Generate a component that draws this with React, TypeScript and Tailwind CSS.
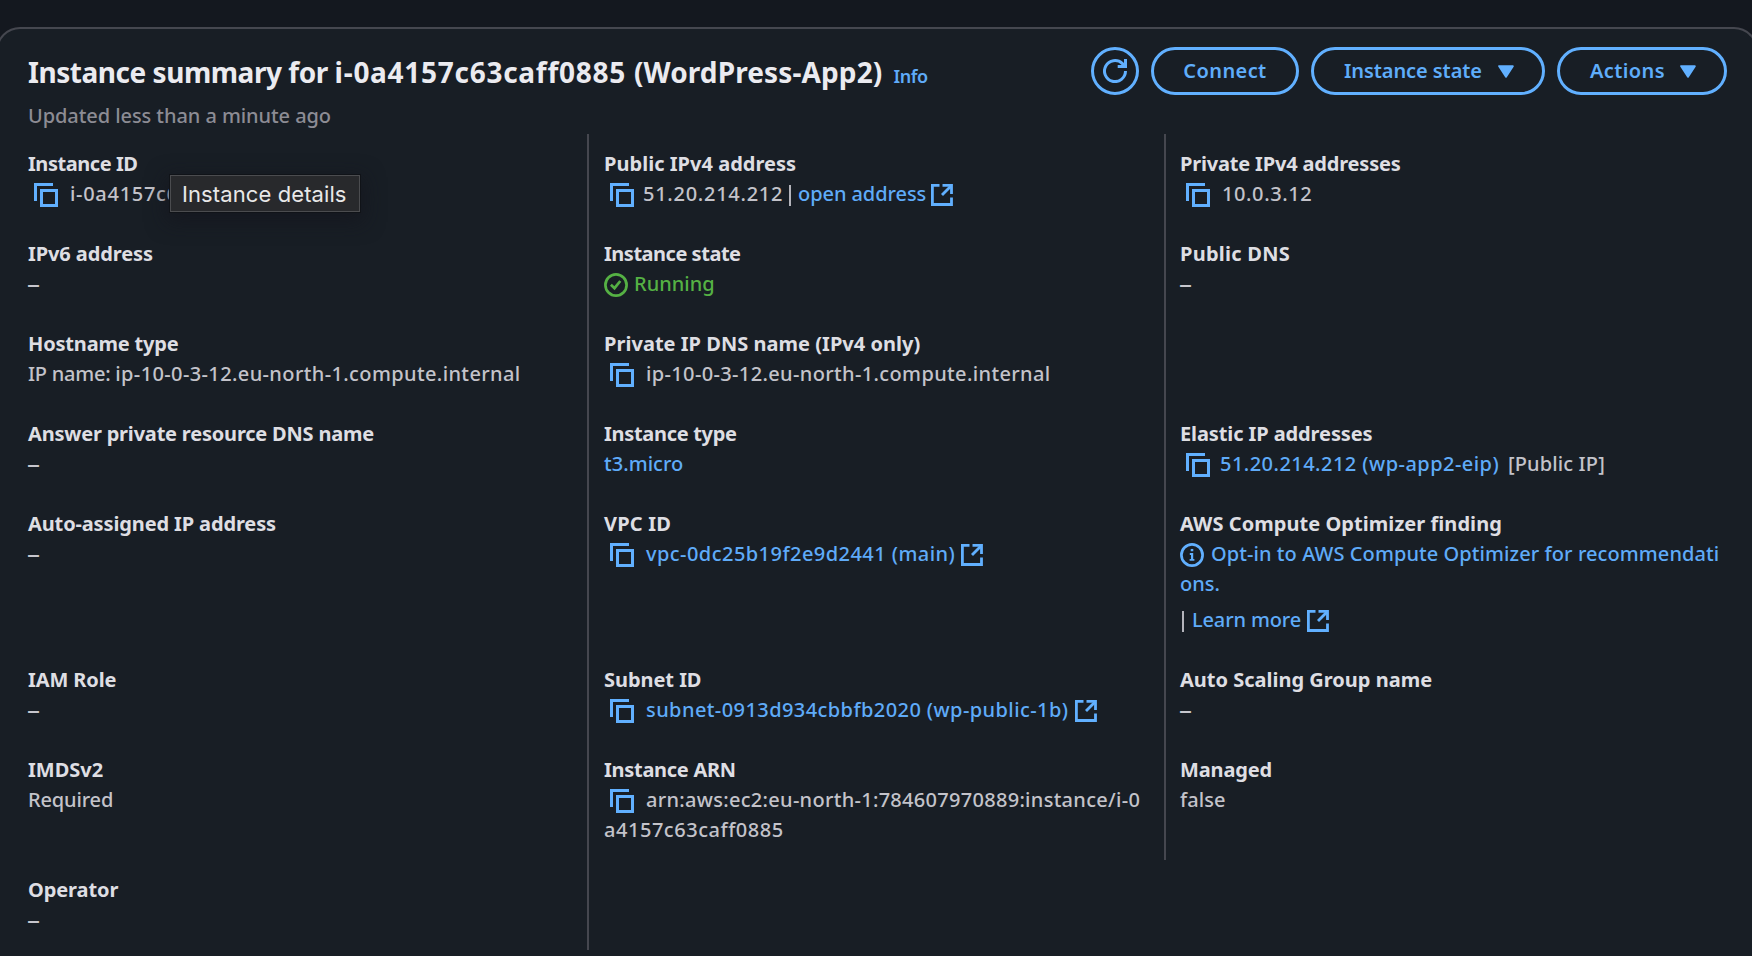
import type { ReactNode } from "react";

const LINK = "font-medium text-[#5fabf8]";
const VALUE = "font-medium text-[#c3c3ca]";

function CopyIcon() {
  return (
    <svg className="mt-[4px] ml-[6px] h-6 w-6 shrink-0 text-[#61b0ff]" viewBox="0 0 24 24" fill="none" stroke="currentColor" strokeWidth="3">
      <path d="M19 1.5H1.5V18" />
      <rect x="7.5" y="7.5" width="15" height="15" />
    </svg>
  );
}

function ExternalIcon() {
  return (
    <svg className="mt-[5px] h-[22px] w-[22px] shrink-0 text-[#61b0ff]" viewBox="0 0 22 22" fill="none" stroke="currentColor" strokeWidth="2.8">
      <path d="M8.5 1.4H1.4V20.5H20.5V13.5" />
      <path d="M11.5 1.4H20.5V10" />
      <path d="M20 2L11 11" />
    </svg>
  );
}

function RunningIcon() {
  return (
    <svg className="mt-[4px] h-6 w-6 shrink-0 text-[#55b144]" viewBox="0 0 24 24" fill="none" stroke="currentColor" strokeWidth="2.7">
      <circle cx="12" cy="12" r="10.6" />
      <path d="M6.9 11.8L10.5 15.2L16.3 8" />
    </svg>
  );
}

function InfoIcon() {
  return (
    <svg className="mt-[4px] h-6 w-6 shrink-0 text-[#61b0ff]" viewBox="0 0 24 24" fill="none" stroke="currentColor" strokeWidth="2.7">
      <circle cx="12" cy="12" r="10.6" />
      <path d="M10.7 7.1H13.3" strokeWidth="2.3" />
      <path d="M9.8 11H12.1V17" strokeWidth="2.2" />
      <path d="M9.6 16.9H14.4" strokeWidth="1.7" />
    </svg>
  );
}

function RefreshIcon() {
  return (
    <svg className="h-6 w-6 text-[#61b0ff]" viewBox="0 0 24 24" fill="none" stroke="currentColor" strokeWidth="3">
      <path d="M22.5 12A10.5 10.5 0 1 1 19.2 4.4L22 7.4" />
      <path d="M22.5 0V7.5H14.7" />
    </svg>
  );
}

function Caret() {
  return (
    <svg className="h-[13px] w-4 text-[#61b0ff]" viewBox="0 0 16 13" fill="currentColor" stroke="currentColor" strokeWidth="2" strokeLinejoin="round">
      <path d="M1.2 1.2H14.8L8 11.6Z" />
    </svg>
  );
}

function Cell({ col, label, tracking = "", children }: { col: 1 | 2 | 3; label?: string; tracking?: string; children?: ReactNode }) {
  const edge =
    col === 1 ? "" : col === 2 ? "border-l-2 border-[#45474f] pl-[15px]" : "border-l-2 border-[#45474f] pl-[14px]";
  return (
    <div className={`relative min-h-[90px] pt-[15px] pb-[15px] whitespace-nowrap ${edge}`}>
      {label && <div className={`font-bold text-[#dedee3] ${tracking}`}>{label}</div>}
      {children}
    </div>
  );
}

function Line({ children }: { children: ReactNode }) {
  return <div className="flex h-[30px] items-start">{children}</div>;
}

function Dash() {
  return <div className="relative -top-px -left-px h-[30px] text-[26px] text-[#c6c6cd]">–</div>;
}

const BUTTON = "flex h-12 items-center rounded-full border-[3px] border-[#61b0ff] font-semibold text-[#5fadfa] whitespace-nowrap";

export default function App() {
  return (
    <div className="flex h-[956px] w-full flex-col overflow-hidden bg-[#14181f] pt-[27px] font-['Noto_Sans',sans-serif] text-[20px] leading-[30px]">
      <section className="-mr-1.5 -ml-1 grow rounded-t-[24px] border-2 border-b-0 border-[#45474f] bg-[#181e25] pt-[18px] pr-[29px] pl-[30px]">
        <header className="flex h-[87px] items-start justify-between">
          <div className="pt-[7px]">
            <div className="flex items-baseline whitespace-nowrap">
              <h1 className="text-[28px] leading-9 font-bold text-[#ebebf0]">
                <span className="tracking-[-0.46px]">Instance summary for </span>
                <span className="tracking-[0.72px]">i-0a4157c63caff0885 </span>
                <span className="tracking-[0.12px]">(WordPress-App2)</span>
              </h1>
              <a className="ml-[11px] text-[18px] leading-6 font-semibold tracking-[-0.4px] text-[#5fabf8]">Info</a>
            </div>
            <p className="mt-[11px] font-medium tracking-[-0.07px] text-[#8c8c94]">Updated less than a minute ago</p>
          </div>
          <div className="flex gap-3">
            <button className="flex h-12 w-12 items-center justify-center rounded-full border-[3px] border-[#61b0ff]">
              <RefreshIcon />
            </button>
            <button className={`w-[148px] justify-center tracking-[0.4px] ${BUTTON}`}>Connect</button>
            <button className={`w-[234px] justify-between pr-7 pl-[30px] tracking-[-0.08px] ${BUTTON}`}>
              Instance state
              <Caret />
            </button>
            <button className={`w-[170px] justify-between pr-7 pl-[30px] tracking-[0.4px] ${BUTTON}`}>
              Actions
              <Caret />
            </button>
          </div>
        </header>

        <div className="grid grid-cols-[559px_577px_1fr]">
          <Cell col={1} label="Instance ID" tracking="tracking-[-0.45px]">
            <Line>
              <CopyIcon />
              <span className={`ml-[12px] tracking-[0.7px] ${VALUE}`}>i-0a4157c63caff0885</span>
            </Line>
            <div className="absolute top-[41px] left-[142px] flex h-[37px] w-[190px] items-center border border-[#4b4c4f] bg-[#28292c] pl-[11px] font-['Inter',sans-serif] text-[22px] leading-none tracking-[0.1px] text-[#e8e8e8] shadow-[0_0_0_1px_#101318,0_6px_20px_4px_rgba(20,20,28,0.6)]">
              Instance details
            </div>
          </Cell>
          <Cell col={2} label="Public IPv4 address" tracking="tracking-[0.03px]">
            <Line>
              <CopyIcon />
              <span className={`ml-[9px] w-[146px] tracking-[0.73px] ${VALUE}`}>51.20.214.212</span>
              <span className="mt-[6px] h-[21px] w-[2px] bg-[#b4b4bb]" />
              <span className={`ml-[7px] w-[133px] tracking-[-0.07px] ${LINK}`}>open address</span>
              <ExternalIcon />
            </Line>
          </Cell>
          <Cell col={3} label="Private IPv4 addresses" tracking="tracking-[-0.18px]">
            <Line>
              <CopyIcon />
              <span className={`ml-[12px] tracking-[0.6px] ${VALUE}`}>10.0.3.12</span>
            </Line>
          </Cell>

          <Cell col={1} label="IPv6 address" tracking="tracking-[-0.1px]">
            <Dash />
          </Cell>
          <Cell col={2} label="Instance state" tracking="tracking-[-0.48px]">
            <Line>
              <RunningIcon />
              <span className="ml-[6px] font-medium text-[#55b144]">Running</span>
            </Line>
          </Cell>
          <Cell col={3} label="Public DNS" tracking="tracking-[0.25px]">
            <Dash />
          </Cell>

          <Cell col={1} label="Hostname type" tracking="tracking-[-0.17px]">
            <div className={VALUE}>
              <span className="tracking-[-0.25px]">IP name: </span>
              <span className="tracking-[0.38px]">ip-10-0-3-12.eu-north-1.compute.internal</span>
            </div>
          </Cell>
          <Cell col={2} label="Private IP DNS name (IPv4 only)" tracking="tracking-[0.03px]">
            <Line>
              <CopyIcon />
              <span className={`ml-[12px] tracking-[0.36px] ${VALUE}`}>ip-10-0-3-12.eu-north-1.compute.internal</span>
            </Line>
          </Cell>
          <Cell col={3} />

          <Cell col={1} label="Answer private resource DNS name" tracking="tracking-[-0.2px]">
            <Dash />
          </Cell>
          <Cell col={2} label="Instance type" tracking="tracking-[-0.3px]">
            <div className={`tracking-[0.04px] ${LINK}`}>t3.micro</div>
          </Cell>
          <Cell col={3} label="Elastic IP addresses" tracking="tracking-[-0.1px]">
            <Line>
              <CopyIcon />
              <span className={`ml-[10px] w-[288px] tracking-[0.46px] ${LINK}`}>51.20.214.212 (wp-app2-eip)</span>
              <span className={`tracking-[0.13px] ${VALUE}`}>[Public IP]</span>
            </Line>
          </Cell>

          <Cell col={1} label="Auto-assigned IP address" tracking="tracking-[-0.13px]">
            <Dash />
          </Cell>
          <Cell col={2} label="VPC ID" tracking="tracking-[0.2px]">
            <Line>
              <CopyIcon />
              <span className={`ml-[12px] w-[315px] tracking-[0.45px] ${LINK}`}>vpc-0dc25b19f2e9d2441 (main)</span>
              <ExternalIcon />
            </Line>
          </Cell>
          <Cell col={3} label="AWS Compute Optimizer finding" tracking="tracking-[0.05px]">
            <Line>
              <InfoIcon />
              <span className={`ml-[7px] tracking-[0.08px] ${LINK}`}>Opt-in to AWS Compute Optimizer for recommendati</span>
            </Line>
            <div className={LINK}>ons.</div>
            <div className="mt-[6px]">
              <Line>
                <span className="mt-[6px] ml-[2px] h-[21px] w-[2px] bg-[#b4b4bb]" />
                <span className={`ml-[8px] w-[115px] tracking-[-0.15px] ${LINK}`}>Learn more</span>
                <ExternalIcon />
              </Line>
            </div>
          </Cell>

          <Cell col={1} label="IAM Role" tracking="tracking-[-0.1px]">
            <Dash />
          </Cell>
          <Cell col={2} label="Subnet ID" tracking="tracking-[-0.05px]">
            <Line>
              <CopyIcon />
              <span className={`ml-[12px] w-[429px] tracking-[0.42px] ${LINK}`}>subnet-0913d934cbbfb2020 (wp-public-1b)</span>
              <ExternalIcon />
            </Line>
          </Cell>
          <Cell col={3} label="Auto Scaling Group name">
            <Dash />
          </Cell>

          <Cell col={1} label="IMDSv2" tracking="tracking-[0px]">
            <div className={`tracking-[-0.15px] ${VALUE}`}>Required</div>
          </Cell>
          <Cell col={2} label="Instance ARN" tracking="tracking-[-0.28px]">
            <Line>
              <CopyIcon />
              <span className={`ml-[12px] tracking-[0.29px] ${VALUE}`}>arn:aws:ec2:eu-north-1:784607970889:instance/i-0</span>
            </Line>
            <div className={`tracking-[0.53px] ${VALUE}`}>a4157c63caff0885</div>
          </Cell>
          <Cell col={3} label="Managed" tracking="tracking-[-0.15px]">
            <div className={`tracking-[0.1px] ${VALUE}`}>false</div>
          </Cell>

          <Cell col={1} label="Operator" tracking="tracking-[-0.1px]">
            <Dash />
          </Cell>
          <Cell col={2} />
        </div>
      </section>
    </div>
  );
}
